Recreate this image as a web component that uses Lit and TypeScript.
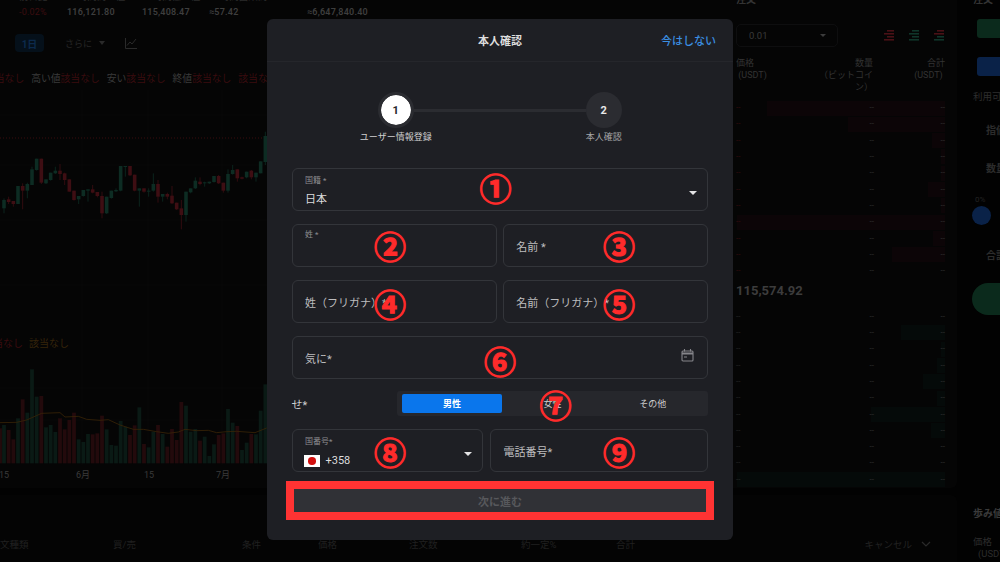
import { LitElement, html, css, svg } from "lit";
import { customElement } from "lit/decorators.js";

type C = [number, number, number, number, number, string];
const candles: C[] = [
  [12,600,625,595,640,"g"],[26,598,606,590,612,"r"],[40,603,612,603,620,"r"],[54,558,612,558,612,"g"],[68,558,572,550,628,"r"],[82,552,572,548,595,"g"],
  [96,508,555,500,555,"g"],[110,476,510,476,512,"g"],[124,476,548,476,552,"r"],[138,538,550,538,552,"g"],[152,518,540,518,542,"g"],[166,512,520,500,522,"g"],
  [180,512,522,492,540,"r"],[194,520,540,518,555,"r"],[208,538,575,538,575,"r"],[222,572,600,572,602,"r"],[236,588,598,588,612,"g"],[250,570,588,570,590,"g"],
  [264,568,572,568,605,"g"],[278,568,578,555,580,"r"],[292,576,588,576,592,"r"],[306,588,640,575,655,"r"],[320,590,640,590,642,"g"],[334,572,594,572,596,"g"],
  [348,570,574,565,576,"g"],[362,498,572,498,574,"g"],[376,498,500,498,530,"g"],[390,498,526,498,528,"r"],[404,524,572,524,574,"r"],[418,565,572,565,620,"g"],
  [432,565,575,565,578,"r"],[446,572,574,565,590,"g"],[460,552,572,520,575,"g"],[474,552,590,540,608,"r"],[488,582,590,582,605,"g"],[502,582,590,578,598,"r"],
  [516,587,610,558,612,"r"],[530,608,628,608,630,"r"],[544,625,645,600,688,"r"],[558,575,645,575,665,"g"],[572,565,577,565,580,"g"],[586,542,565,532,567,"g"],
  [600,545,552,532,556,"r"],[614,547,550,545,560,"g"],[628,545,550,545,552,"g"],[642,528,546,528,548,"g"],[656,528,550,525,552,"r"],[670,548,572,548,578,"r"],
  [684,522,572,508,578,"g"],[698,510,522,495,524,"g"],[712,508,535,508,545,"r"],[726,532,536,530,538,"r"],[740,515,532,515,535,"g"],[754,512,532,510,538,"r"],
  [768,518,532,518,545,"g"],[782,484,520,484,520,"g"],[796,408,486,395,495,"g"],
];
const vols: [number, number, string][] = [
  [0,445,"r"],[12,435,"g"],[26,450,"r"],[40,478,"r"],[54,415,"g"],[68,358,"r"],[82,398,"g"],[96,268,"g"],[110,350,"g"],[124,348,"r"],[138,442,"g"],[152,435,"g"],
  [166,456,"g"],[180,415,"r"],[194,448,"r"],[208,420,"r"],[222,398,"r"],[236,478,"g"],[250,486,"g"],[264,462,"g"],[278,463,"r"],[292,460,"r"],[306,407,"r"],[320,448,"g"],
  [334,495,"g"],[348,497,"g"],[362,423,"g"],[376,440,"g"],[390,465,"r"],[404,436,"r"],[418,382,"g"],[432,492,"r"],[446,502,"g"],[460,455,"g"],[474,435,"r"],[488,462,"g"],
  [502,500,"r"],[516,447,"r"],[530,480,"r"],[544,366,"r"],[558,377,"g"],[572,455,"g"],[586,447,"g"],[600,482,"r"],[614,470,"g"],[628,528,"g"],[642,493,"g"],[656,465,"r"],
  [670,460,"r"],[684,387,"g"],[698,428,"g"],[712,438,"r"],[726,510,"g"],[740,488,"g"],[754,462,"r"],[768,463,"g"],[782,392,"g"],[796,313,"g"],
];
const ma = [[0,428],[50,427],[80,420],[125,400],[180,398],[195,411],[235,409],[260,418],[300,421],[325,419],[360,435],[400,448],[430,448],[470,455],[505,460],[535,456],[555,448],[590,452],[625,451],[650,458],[680,455],[710,454],[765,458],[800,444]];

const askBars = [178, 97, 13, 4, 4, 17, 4, 208, 12, 53, 0];
const bidBars = [0, 44, 4, 8, 22, 8, 74, 14, 0, 0, 208];
const marks = [
  ["①", 495.5, 187], ["②", 390, 245], ["③", 619, 245], ["④", 390, 303], ["⑤", 619, 303],
  ["⑥", 500, 360], ["⑦", 555.5, 404], ["⑧", 390, 451], ["⑨", 619, 451],
] as const;

@customElement("app-root")
export class AppRoot extends LitElement {
  static styles = css`
    :host { display: block; position: relative; width: 1000px; height: 562px; overflow: hidden; background: #020202;
      font-family: Roboto, "Noto Sans CJK JP", sans-serif; color: #3c3c3c; }
    .bg { display: grid; grid-template-columns: 957px 1fr; gap: 4px; height: 562px; }
    .leftcol { display: flex; flex-direction: column; gap: 7px; }
    .toprow { display: grid; grid-template-columns: 733px 1fr; height: 488px; background: #050505; border-radius: 0 0 6px 0; }
    .chart { overflow: hidden; font-size: 10px; }
    .stats { display: grid; grid-template-columns: 48px 75px 67px 98px auto; padding-left: 19px; margin-top: -10px; line-height: 13px; height: 29px; }
    .stats span { white-space: nowrap; font-size: 9.5px; color: #2c2c2c; display: block; }
    .stats b { display: block; font-size: 9px; font-weight: 600; color: #3e3e3e; white-space: nowrap; letter-spacing: .2px; margin-top: 3px; }
    .stats b.neg { color: #3c0d10; font-weight: 400; }
    .tools { display: flex; align-items: center; height: 18px; margin-top: 15px; padding-left: 15px; color: #262626; }
    .pill { width: 29px; height: 18px; background: #05101a; color: #0c2a4c; border-radius: 4px; font-weight: 700; display: flex; align-items: center; justify-content: center; margin-right: 21px; }
    .tools .more { font-size: 9px; width: 34px; }
    .tools .tri { border-left: 3px solid transparent; border-right: 3px solid transparent; border-top: 4px solid #2a2a2a; margin-right: 18px; }
    .legend { display: flex; padding-top: 19px; height: 15px; line-height: 15px; white-space: nowrap; color: #3a3a3a; margin-left: -15px; font-size: 9.8px; }
    .legend i { font-style: normal; color: #3a0c0f; margin-right: 7px; }
    .plot { display: block; margin-top: 4px; }
    .book { padding: 0 12px 0 3px; font-size: 9.5px; overflow: hidden; }
    .bookhead { margin-top: -6px; height: 12px; font-size: 10px; font-weight: 600; color: #333; line-height: 12px; }
    .bookctl { display: flex; align-items: center; margin-top: 18px; height: 23px; }
    .sel { width: 102px; height: 23px; box-sizing: border-box; border: 1px solid #0e0e0f; border-radius: 5px; display: flex; align-items: center; justify-content: space-between; padding: 0 11px 0 12px; color: #3a3a3a; margin-right: 46px; }
    .sel u { width: 0; height: 0; border: 3px solid transparent; border-top: 3px solid #3c3c3c; border-bottom: 0; }
    .ico { display: flex; gap: 15px; }
    .cols { display: grid; grid-template-columns: 83px 54px 1fr; margin-top: 10px; line-height: 12px; color: #333; font-size: 9px; height: 43px; }
    .cols div:nth-child(2), .cols div:nth-child(3) { text-align: right; }
    .rows { display: flex; flex-direction: column; }
    .row { position: relative; height: 16.3px; display: grid; grid-template-columns: 60px 78px 1fr; align-items: center; line-height: 16px; font-size: 8px; color: #333; }
    .row .bar { position: absolute; right: 0; top: .5px; height: 15px; }
    .row.ask .bar { background: #0c0507; }
    .row.bid .bar { background: #050a09; }
    .row span { position: relative; }
    .row.ask span:first-of-type { color: #3a0c0f; }
    .row.bid span:first-of-type { color: #2a2a2a; }
    .row span:nth-of-type(2), .row span:nth-of-type(3) { text-align: right; }
    .mid { font-size: 13px; font-weight: 700; color: #3c3c3c; height: 28.4px; line-height: 22px; margin-top: 1px; }
    .bottom { box-sizing: border-box; background: #040404; height: 67px; display: grid; grid-template-columns: 113px 129px 76px 91px 112px 95px 1fr auto; align-items: end; padding-bottom: 11px; font-size: 9.5px; color: #202020; white-space: nowrap; border-radius: 0 6px 0 0; }
    .bottom .cancel { display: flex; align-items: center; gap: 9px; margin-right: 26px; color: #222; }
    .rightcol { display: flex; flex-direction: column; gap: 7px; font-size: 9.5px; overflow: hidden; padding-left: 11px; white-space: nowrap; background: #020202; }
    .form { height: 488px; display: flex; flex-direction: column; }
    .form .h { margin: -6px 0 0 1px; height: 12px; font-weight: 600; font-size: 10px; color: #333; line-height: 12px; }
    .btn { margin: 13px 0 0 5px; height: 19px; width: 40px; border-radius: 3px; flex: none; }
    .btn.g { background: #0b2a1c; } .btn.b { background: #0a2248; margin-top: 19px; }
    .avail { margin: 15px 0 0 1px; color: #2e2e2e; line-height: 12px; }
    .lab { margin: 22px 0 0 14px; font-weight: 700; color: #2c2c2c; line-height: 12px; font-size: 10px; }
    .lab.qty { margin-top: 26px; } .lab.sum { margin-top: 25px; }
    .pct { margin: 20px 0 0 3px; font-size: 8px; color: #222; line-height: 10px; }
    .dot { width: 19px; height: 19px; border-radius: 50%; background: #0a2248; margin-top: 1px; flex: none; }
    .pillbtn { width: 60px; height: 32px; border-radius: 16px; background: #0b2a1c; margin-top: 21px; flex: none; }
    .trades { color: #2c2c2c; line-height: 12px; margin-left: 1px; }
    .trades b { display: block; font-size: 10px; margin: 13px 0 16px; color: #3a3a3a; }
    .trades span { display: block; padding-left: 5px; }

    .overlay { position: absolute; inset: 0; display: flex; justify-content: center; align-items: flex-start; padding-top: 19px; }
    .modal { position: relative; width: 466px; height: 521px; box-sizing: border-box; background: #1e1f24; border-radius: 6px; color: #ddd; display: flex; flex-direction: column; }
    .mh { height: 43px; box-sizing: border-box; border-bottom: 1px solid #25262b; display: grid; grid-template-columns: 1fr auto 1fr; align-items: center; padding: 0 17px; }
    .mh .t { font-size: 11px; font-weight: 700; color: #ddd; }
    .mh .s { font-size: 11px; font-weight: 500; color: #3b8fe3; justify-self: end; white-space: nowrap; }
    .mb { display: flex; flex-direction: column; padding: 30px 25px 0 24.5px; }
    .circles { display: flex; justify-content: center; align-items: center; }
    .c { box-sizing: border-box; width: 36px; height: 36px; border-radius: 50%; background: #2b2c31; display: flex; align-items: center; justify-content: center; font-size: 11px; font-weight: 700; color: #e8e8e8; }
    .c.on { border: 3px solid #2b2c31; background: #fff; color: #26272c; background-clip: padding-box; }
    .line { width: 172px; height: 3px; background: #2b2c31; }
    .labels { display: flex; justify-content: center; gap: 128px; margin-top: 3px; margin-bottom: 25px; }
    .labels span { width: 80px; text-align: center; font-size: 9px; line-height: 12px; color: #a5a5a7; white-space: nowrap; }
    .labels span.on { color: #cfcfd0; }
    .grid { display: flex; flex-direction: column; gap: 13px; }
    .two { display: grid; grid-template-columns: 1fr 1fr; gap: 6px; }
    .f { position: relative; box-sizing: border-box; height: 43px; border: 1px solid #33353a; border-radius: 6px; padding: 0 13px 0 12.5px; display: flex; align-items: center; justify-content: space-between; font-size: 11px; color: #bdbdbf; white-space: nowrap; min-width: 0; }
    .stack { display: flex; flex-direction: column; align-self: flex-start; padding-top: 7px; }
    .stack small { font-size: 8px; line-height: 10px; color: #8d8d90; }
    .stack em { font-style: normal; font-size: 11px; line-height: 14px; color: #dcdcdd; margin-top: 7px; display: flex; align-items: center; }
    .stack.top { padding-top: 5px; }
    .caret { width: 0; height: 0; border-left: 4.5px solid transparent; border-right: 4.5px solid transparent; border-top: 4.5px solid #e4e4e5; margin: 7px -3px 0 0; }
    .flag { width: 16px; height: 12.5px; background: #fff; display: flex; align-items: center; justify-content: center; margin: 0 5.5px 0 -1px; }
    .flag i { width: 7.5px; height: 7.5px; border-radius: 50%; background: #d2100f; }
    .gender { display: flex; align-items: center; justify-content: space-between; margin-top: -1px; height: 25px; font-size: 11px; color: #cfcfd0; }
    .seg { width: 311px; height: 25px; box-sizing: border-box; background: #26272c; border-radius: 3px; padding: 3px 5px; display: grid; grid-template-columns: repeat(3, 1fr); }
    .seg span { display: flex; align-items: center; justify-content: center; font-size: 9px; color: #cfcfd0; border-radius: 2px; }
    .seg span.on { background: #0a76ec; color: #fff; font-weight: 700; margin-right: .5px; }
    .phone { display: grid; grid-template-columns: 191.5px 1fr; gap: 7px; }
    .hl { box-sizing: border-box; height: 39px; margin: -4px -6px 0 -5.5px; border: 8px solid #ff3333; }
    .next { height: 100%; background: #303136; display: flex; align-items: center; justify-content: center; font-size: 11px; font-weight: 700; color: #57585c; }
    .mark { position: absolute; width: 30px; height: 30px; display: flex; align-items: center; justify-content: center; font-family: "Noto Sans CJK JP", sans-serif; font-size: 32px; line-height: 30px; font-weight: 700; color: #ff2b2b; -webkit-text-stroke: 1.1px #ff2b2b; }
  `;

  private plot() {
    const col = (c: string) => (c === "g" ? "#0d2c23" : "#3e0e13");
    const vcol = (c: string) => (c === "g" ? "#0a1a15" : "#230a0c");
    const line = ma.map(([x, y]) => `${x / 3},${y / 3 + 280}`).join(" ");
    return html`<svg class="plot" width="733" height="398" viewBox="0 90 733 398">
      ${[82, 148, 222].map((x) => svg`<line x1=${x} x2=${x} y1="90" y2="465" stroke="#080808"/>`)}
      ${[115, 165, 220, 285, 388, 420].map((y) => svg`<line x1="0" x2="267" y1=${y} y2=${y} stroke="#080808"/>`)}
      <line x1="0" x2="267" y1="138" y2="138" stroke="#3a0c0f" stroke-dasharray="1 2"/>
      ${candles.map(([x, t, b, wt, wb, c]) => svg`
        <line x1=${x / 3} x2=${x / 3} y1=${wt / 3} y2=${wb / 3} stroke=${col(c)} stroke-width=".8"/>
        <rect x=${x / 3 - 1.8} y=${t / 3} width="3.6" height=${Math.max(1, (b - t) / 3)} fill=${col(c)}/>`)}
      ${vols.map(([x, t, c]) => svg`<rect x=${x / 3 - 1.9} y=${t / 3 + 280} width="3.8" height=${(550 - t) / 3} fill=${vcol(c)}/>`)}
      <polyline points=${line} fill="none" stroke="#3a2406" stroke-width=".8"/>
      <g font-size="10" font-family="Roboto, 'Noto Sans CJK JP', sans-serif">
        <text x="-17" y="347" fill="#3a0c0f">該当なし</text>
        <text x="29" y="347" fill="#36240a">該当なし</text>
      </g>
      <g font-size="9" fill="#3a3a3a" font-family="Roboto, 'Noto Sans CJK JP', sans-serif">
        <text x="-1" y="478">15</text><text x="76" y="478">6月</text><text x="144" y="478">15</text><text x="216" y="478">7月</text>
      </g>
    </svg>`;
  }

  private bookRows(kind: string, bars: number[]) {
    return html`<div class="rows">${bars.map((w) => html`<div class="row ${kind}">
      <div class="bar" style="width:${w}px"></div><span>--</span><span>--</span><span>--</span>
    </div>`)}</div>`;
  }

  private bookIcon(a: string, b: string) {
    return svg`<svg width="10" height="11" viewBox="0 0 10 11">
      <rect x="3" y="0" width="7" height="1.6" fill=${a}/><rect x="0" y="3" width="10" height="1.6" fill=${a}/>
      <rect x="3" y="6" width="7" height="1.6" fill=${b}/><rect x="0" y="9" width="10" height="1.6" fill=${b}/></svg>`;
  }

  render() {
    return html`
      <div class="bg">
        <div class="leftcol">
          <div class="toprow">
            <div class="chart">
              <div class="stats">
                <div><span>前日比</span><b class="neg">-0.02%</b></div>
                <div><span>24時間高い値</span><b>116,121.80</b></div>
                <div><span>24時間低い値</span><b>115,408.47</b></div>
                <div><span>24時間出来高</span><b>≈57.42</b></div>
                <div><span>&nbsp;</span><b>≈6,647,840.40</b></div>
              </div>
              <div class="tools">
                <div class="pill">1日</div><span class="more">さらに</span><span class="tri"></span>
                <svg style="margin-left:2px" width="12" height="11" viewBox="0 0 12 11" fill="none" stroke="#2a2a2a"><path d="M.5 0v10.5H12M2 7.5l3-3.5 2 2 4-5"/></svg>
              </div>
              <div class="legend">
                <i>該当なし</i><span>高い値</span><i>該当なし</i><span>安い</span><i>該当なし</i><span>終値</span><i>該当なし</i><i>該当なし</i>
              </div>
              ${this.plot()}
            </div>
            <div class="book">
              <div class="bookhead">注文</div>
              <div class="bookctl">
                <div class="sel">0.01<u></u></div>
                <div class="ico">${this.bookIcon("#4a1116", "#4a1116")}${this.bookIcon("#10352a", "#10352a")}${this.bookIcon("#4a1116", "#10352a")}</div>
              </div>
              <div class="cols">
                <div>価格<br />&nbsp;(USDT)</div>
                <div>数量<br />（ビットコイン）</div>
                <div>合計<br />(USDT)&nbsp;</div>
              </div>
              ${this.bookRows("ask", askBars)}
              <div class="mid">115,574.92</div>
              ${this.bookRows("bid", bidBars)}
            </div>
          </div>
          <div class="bottom">
            <span>文種類</span><span>買/売</span><span>条件</span><span>価格</span><span>注文数</span><span>約一定%</span><span>合計</span>
            <span class="cancel">キャンセル
              <svg width="10" height="6" viewBox="0 0 10 6" fill="none" stroke="#2a2a2a" stroke-width="1.2"><path d="M1 1l4 4 4-4"/></svg></span>
          </div>
        </div>
        <div class="rightcol">
          <div class="form">
            <div class="h">注文</div>
            <div class="btn g"></div><div class="btn b"></div>
            <div class="avail">利用可能</div>
            <div class="lab">指値</div><div class="lab qty">数量</div>
            <div class="pct">0%</div><div class="dot"></div>
            <div class="lab sum">合計</div>
            <div class="pillbtn"></div>
          </div>
          <div class="trades"><b>歩み値</b>価格<span>(USDT)</span></div>
        </div>
      </div>

      <div class="overlay">
        <div class="modal">
          <div class="mh"><span></span><span class="t">本人確認</span><span class="s">今はしない</span></div>
          <div class="mb">
            <div class="circles"><div class="c on">1</div><div class="line"></div><div class="c">2</div></div>
            <div class="labels"><span class="on">ユーザー情報登録</span><span>本人確認</span></div>
            <div class="grid">
              <div class="f"><div class="stack"><small>国籍 *</small><em>日本</em></div><span class="caret"></span></div>
              <div class="two">
                <div class="f"><div class="stack top"><small>姓 *</small></div></div>
                <div class="f">名前 *</div>
              </div>
              <div class="two">
                <div class="f">姓（フリガナ）*</div>
                <div class="f">名前（フリガナ）*</div>
              </div>
              <div class="f">気に*
                <svg style="margin:-4px 0 0" width="13" height="13" viewBox="0 0 13 13" fill="none" stroke="#85858a" stroke-width="1.1"><rect x="1" y="2" width="11" height="10" rx="1"/><path d="M1 4.5h11" stroke-width="2"/><path d="M3.5 0v2.5M9.5 0v2.5M3 8h3" /></svg>
              </div>
              <div class="gender">せ*
                <div class="seg"><span class="on">男性</span><span>女性</span><span>その他</span></div>
              </div>
              <div class="phone">
                <div class="f"><div class="stack"><small>国番号*</small><em><span class="flag"><i></i></span>+358</em></div><span class="caret"></span></div>
                <div class="f">電話番号*</div>
              </div>
              <div class="hl"><div class="next">次に進む</div></div>
            </div>
          </div>
          ${marks.map(([t, x, y]) => html`<span class="mark" style="left:${x - 267 - 15}px;top:${y - 19 - 15}px">${t}</span>`)}
        </div>
      </div>
    `;
  }
}
